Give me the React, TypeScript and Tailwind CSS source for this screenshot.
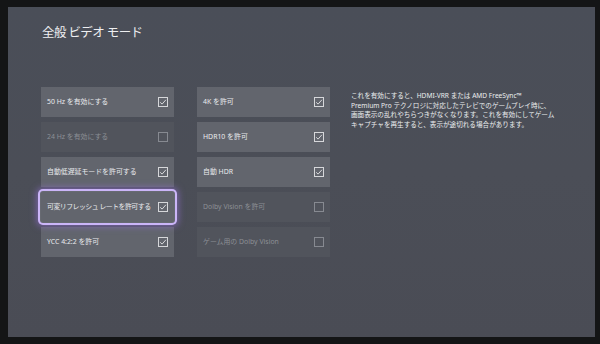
import React from 'react';

type Option = {
  label: string;
  checked: boolean;
  disabled?: boolean;
  focused?: boolean;
};

const leftOptions: Option[] = [
  { label: '50 Hz を有効にする', checked: true },
  { label: '24 Hz を有効にする', checked: false, disabled: true },
  { label: '自動低遅延モードを許可する', checked: true },
  { label: '可変リフレッシュ レートを許可する', checked: true, focused: true },
  { label: 'YCC 4:2:2 を許可', checked: true },
];

const rightOptions: Option[] = [
  { label: '4K を許可', checked: true },
  { label: 'HDR10 を許可', checked: true },
  { label: '自動 HDR', checked: true },
  { label: 'Dolby Vision を許可', checked: false, disabled: true },
  { label: 'ゲーム用の Dolby Vision', checked: false, disabled: true },
];

const CheckBox: React.FC<{ checked: boolean; disabled?: boolean }> = ({ checked, disabled }) => (
  <div
    className={`w-[10px] h-[10px] shrink-0 border flex items-center justify-center ${
      disabled ? 'border-[#878a91]' : 'border-[#d6d7da]'
    }`}
  >
    {checked && (
      <svg width="8" height="8" viewBox="0 0 8 8" fill="none">
        <path d="M1.2 4.3 L3.1 6.1 L6.9 1.8" stroke="#e4e5e8" strokeWidth="0.9" />
      </svg>
    )}
  </div>
);

const OptionRow: React.FC<{ option: Option }> = ({ option }) => (
  <div
    className={`h-[30px] flex items-center justify-between pl-[6px] pr-[6px] ${
      option.disabled ? 'bg-[#51545c] text-[#8c8f95]' : 'bg-[#62656d] text-[#eaebee]'
    } ${
      option.focused
        ? 'shadow-[0_0_0_1px_#676a72,0_0_0_3px_#cbb5f8,0_0_7px_4px_rgba(165,120,245,0.55)] rounded-[2px] z-10'
        : ''
    }`}
  >
    <span
      className={`text-[6.9px] whitespace-nowrap ${option.focused ? 'tracking-[-0.5px]' : ''}`}
    >
      {option.label}
    </span>
    <CheckBox checked={option.checked} disabled={option.disabled} />
  </div>
);

const App: React.FC = () => {
  return (
    <div
      className="w-[600px] h-[344px] bg-[#141516] pt-[7px] pl-[8px] pr-[5px] pb-[7px] flex"
      style={{ fontFamily: "'Noto Sans', 'Noto Sans CJK JP', sans-serif" }}
    >
      <div className="flex-1 bg-gradient-to-b from-[#4a4e58] via-[#4b4e57] to-[#4a4c55] flex flex-col">
        <h1 className="pl-[34px] pt-[17px] text-[12.5px] leading-[18px] tracking-[-0.6px] text-[#eeeff1] font-normal">
          全般 ビデオ モード
        </h1>

        <div className="flex pl-[33px] pt-[45px]">
          <div className="w-[133px] flex flex-col gap-[5px]">
            {leftOptions.map(o => (
              <OptionRow key={o.label} option={o} />
            ))}
          </div>

          <div className="w-[133px] ml-[23px] flex flex-col gap-[5px]">
            {rightOptions.map(o => (
              <OptionRow key={o.label} option={o} />
            ))}
          </div>

          <p className="ml-[21px] pt-[4px] text-[6.6px] leading-[9.7px] text-[#eceef0] whitespace-nowrap">
            これを有効にすると、HDMI-VRR または AMD FreeSync™
            <br />
            Premium Pro テクノロジに対応したテレビでのゲームプレイ時に、
            <br />
            画面表示の乱れやちらつきがなくなります。これを有効にしてゲーム
            <br />
            キャプチャを再生すると、表示が途切れる場合があります。
          </p>
        </div>
      </div>
    </div>
  );
};

export default App;
